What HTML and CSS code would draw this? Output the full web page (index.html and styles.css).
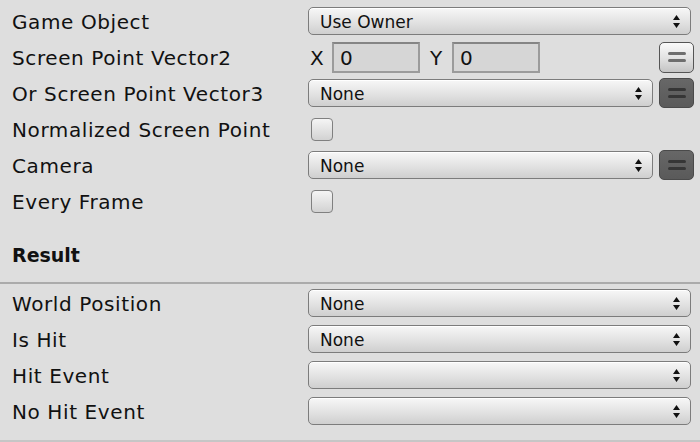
FILE: index.html
```html
<!DOCTYPE html>
<html>
<head>
<meta charset="utf-8">
<link rel="stylesheet" href="styles.css">
</head>
<body>
<div class="panel">
  <div class="row">
    <div class="label">Game Object</div>
    <div class="field"><div class="dropdown"><span>Use Owner</span><svg class="arrows" width="7" height="13" viewBox="0 0 7 13"><path d="M3.5 0L7 5H0Z M3.5 13L7 8H0Z" fill="#111"/></svg></div></div>
  </div>
  <div class="row">
    <div class="label">Screen Point Vector2</div>
    <div class="field vec">
      <span class="axis">X</span><div class="input">0</div>
      <span class="axis ay">Y</span><div class="input">0</div>
      <div class="grow"></div>
      <div class="eqbtn light"><i></i><i></i></div>
    </div>
  </div>
  <div class="row">
    <div class="label">Or Screen Point Vector3</div>
    <div class="field"><div class="dropdown"><span>None</span><svg class="arrows" width="7" height="13" viewBox="0 0 7 13"><path d="M3.5 0L7 5H0Z M3.5 13L7 8H0Z" fill="#111"/></svg></div><div class="eqbtn dark"><i></i><i></i></div></div>
  </div>
  <div class="row">
    <div class="label">Normalized Screen Point</div>
    <div class="field"><div class="check"></div></div>
  </div>
  <div class="row">
    <div class="label">Camera</div>
    <div class="field"><div class="dropdown"><span>None</span><svg class="arrows" width="7" height="13" viewBox="0 0 7 13"><path d="M3.5 0L7 5H0Z M3.5 13L7 8H0Z" fill="#111"/></svg></div><div class="eqbtn dark"><i></i><i></i></div></div>
  </div>
  <div class="row">
    <div class="label">Every Frame</div>
    <div class="field"><div class="check"></div></div>
  </div>
  <div class="section">Result</div>
  <div class="results">
    <div class="row">
      <div class="label">World Position</div>
      <div class="field"><div class="dropdown"><span>None</span><svg class="arrows" width="7" height="13" viewBox="0 0 7 13"><path d="M3.5 0L7 5H0Z M3.5 13L7 8H0Z" fill="#111"/></svg></div></div>
    </div>
    <div class="row">
      <div class="label">Is Hit</div>
      <div class="field"><div class="dropdown"><span>None</span><svg class="arrows" width="7" height="13" viewBox="0 0 7 13"><path d="M3.5 0L7 5H0Z M3.5 13L7 8H0Z" fill="#111"/></svg></div></div>
    </div>
    <div class="row">
      <div class="label">Hit Event</div>
      <div class="field"><div class="dropdown"><span></span><svg class="arrows" width="7" height="13" viewBox="0 0 7 13"><path d="M3.5 0L7 5H0Z M3.5 13L7 8H0Z" fill="#111"/></svg></div></div>
    </div>
    <div class="row">
      <div class="label">No Hit Event</div>
      <div class="field"><div class="dropdown"><span></span><svg class="arrows" width="7" height="13" viewBox="0 0 7 13"><path d="M3.5 0L7 5H0Z M3.5 13L7 8H0Z" fill="#111"/></svg></div></div>
    </div>
  </div>
</div>
</body>
</html>
```
FILE: styles.css
```css
html, body {
  margin: 0;
  padding: 0;
  background: #dedede;
  width: 700px;
  height: 442px;
  overflow: hidden;
}
.panel {
  padding-top: 3px;
  font-family: "DejaVu Sans", sans-serif;
  color: #111;
}
.row {
  display: flex;
  align-items: center;
  height: 36px;
}
.label {
  width: 296px;
  padding-left: 12px;
  padding-top: 2px;
  font-size: 20px;
  letter-spacing: 0.6px;
  white-space: nowrap;
}
.field {
  flex: 1;
  display: flex;
  align-items: center;
  padding-right: 9px;
}
.dropdown {
  flex: 1;
  height: 26px;
  border: 1px solid #7c7c7c;
  border-radius: 5px;
  background: linear-gradient(#f7f7f7, #e6e6e6 45%, #cfcfcf);
  box-shadow: inset 0 1px 0 #fff;
  display: flex;
  align-items: center;
  padding: 0 10px 0 11px;
  font-size: 17px;
}
.dropdown span { flex: 1; padding-top: 1px; }
.arrows { display: block; }
.eqbtn {
  width: 33px;
  height: 28px;
  border-radius: 5px;
  display: flex;
  flex-direction: column;
  align-items: center;
  justify-content: center;
  gap: 4px;
  margin-left: 6px;
  margin-right: -3px;
}
.eqbtn i {
  display: block;
  width: 18px;
  height: 3px;
  border-radius: 2px;
}
.eqbtn.light {
  border: 1px solid #555;
  background: linear-gradient(#fafafa, #e3e3e3 50%, #c4c4c4);
  height: 29px;
}
.eqbtn.light i { background: #6e6e6e; }
.eqbtn.dark {
  border: 1px solid #4a4a4a;
  background: linear-gradient(#676767, #5a5a5a);
}
.eqbtn.dark i { background: #363636; }
.vec .axis {
  font-size: 20px;
  margin-left: 2px;
  width: 22px;
  padding-top: 2px;
}
.vec .ay { margin-left: 10px; }
.input {
  width: 78px;
  height: 27px;
  border: 2px solid #9b9b9b;
  border-top-color: #858585;
  background: #d6d6d6;
  font-size: 20px;
  line-height: 29px;
  padding-left: 6px;
}
.grow { flex: 1; }
.check {
  width: 20px;
  height: 21px;
  margin-left: 3px;
  border: 1px solid #808080;
  border-radius: 4px;
  background: linear-gradient(#f5f5f5, #d2d2d2);
}
.section {
  margin-top: 18px;
  height: 36px;
  line-height: 36px;
  padding-left: 12px;
  font-size: 19px;
  font-weight: bold;
  margin-bottom: 9px;
}
.results {
  border-top: 2px solid #ababab;
  padding-top: 1px;
  height: 155px;
  border-bottom: 2px solid #c6c6c6;
}
```
